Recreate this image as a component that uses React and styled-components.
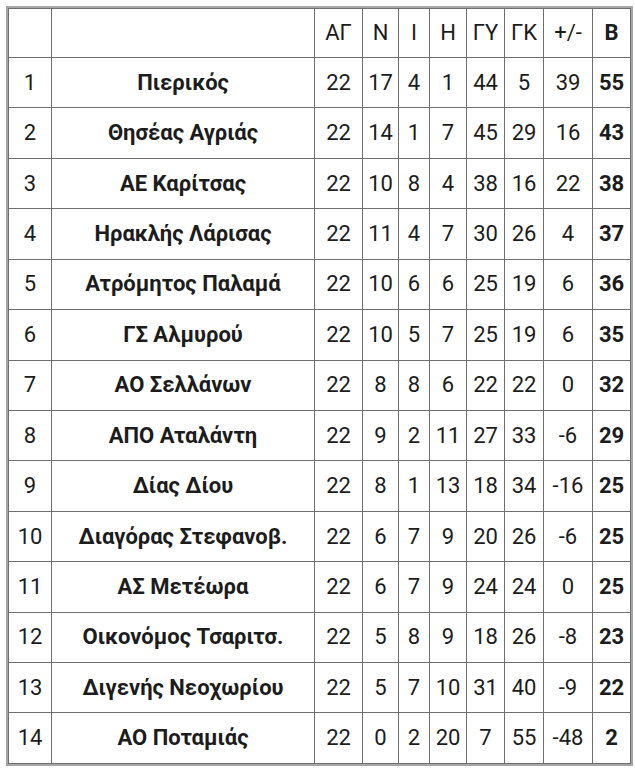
import React from 'react';
import styled, { createGlobalStyle } from 'styled-components';

const rows = [
  [1, 'Πιερικός', 22, 17, 4, 1, 44, 5, 39, 55],
  [2, 'Θησέας Αγριάς', 22, 14, 1, 7, 45, 29, 16, 43],
  [3, 'ΑΕ Καρίτσας', 22, 10, 8, 4, 38, 16, 22, 38],
  [4, 'Ηρακλής Λάρισας', 22, 11, 4, 7, 30, 26, 4, 37],
  [5, 'Ατρόμητος Παλαμά', 22, 10, 6, 6, 25, 19, 6, 36],
  [6, 'ΓΣ Αλμυρού', 22, 10, 5, 7, 25, 19, 6, 35],
  [7, 'ΑΟ Σελλάνων', 22, 8, 8, 6, 22, 22, 0, 32],
  [8, 'ΑΠΟ Αταλάντη', 22, 9, 2, 11, 27, 33, -6, 29],
  [9, 'Δίας Δίου', 22, 8, 1, 13, 18, 34, -16, 25],
  [10, 'Διαγόρας Στεφανοβ.', 22, 6, 7, 9, 20, 26, -6, 25],
  [11, 'ΑΣ Μετέωρα', 22, 6, 7, 9, 24, 24, 0, 25],
  [12, 'Οικονόμος Τσαριτσ.', 22, 5, 8, 9, 18, 26, -8, 23],
  [13, 'Διγενής Νεοχωρίου', 22, 5, 7, 10, 31, 40, -9, 22],
  [14, 'ΑΟ Ποταμιάς', 22, 0, 2, 20, 7, 55, -48, 2],
];

const headers = ['', '', 'ΑΓ', 'Ν', 'Ι', 'Η', 'ΓΥ', 'ΓΚ', '+/-', 'Β'];

const GlobalStyle = createGlobalStyle`
  html, body {
    margin: 0;
    padding: 0;
    background: #fff;
  }
  body {
    font-family: Roboto, "Liberation Sans", Arial, sans-serif;
  }
`;

const Page = styled.div`
  padding: 6px 0 0 6px;
`;

const Table = styled.div`
  display: inline-grid;
  grid-template-columns: 44px 263px 48px 36px 31px 37px 38px 39px 49px 38px;
  grid-template-rows: 50px repeat(14, 50.43px);
  border: 2px solid #a6a6a6;
  color: #1c1c1c;
`;

const Cell = styled.div`
  box-sizing: border-box;
  display: flex;
  align-items: center;
  justify-content: center;
  border-right: 1px solid #6e6e6e;
  border-bottom: 1px solid #6e6e6e;
  border-left: ${({ $first }) => ($first ? '1px solid #6e6e6e' : 'none')};
  border-top: ${({ $top }) => ($top ? '1px solid #6e6e6e' : 'none')};
  font-size: 22px;
  font-weight: ${({ $bold }) => ($bold ? 700 : 400)};
  white-space: nowrap;
  padding-bottom: 1px;
`;

const App = () => (
  <>
    <GlobalStyle />
    <Page>
      <Table>
        {headers.map((h, i) => (
          <Cell key={`h${i}`} $top $first={i === 0} $bold={i === 9}>
            {h}
          </Cell>
        ))}
        {rows.map((row) =>
          row.map((v, i) => (
            <Cell key={`${row[0]}-${i}`} $first={i === 0} $bold={i === 1 || i === 9}>
              {v}
            </Cell>
          )),
        )}
      </Table>
    </Page>
  </>
);

export default App;
